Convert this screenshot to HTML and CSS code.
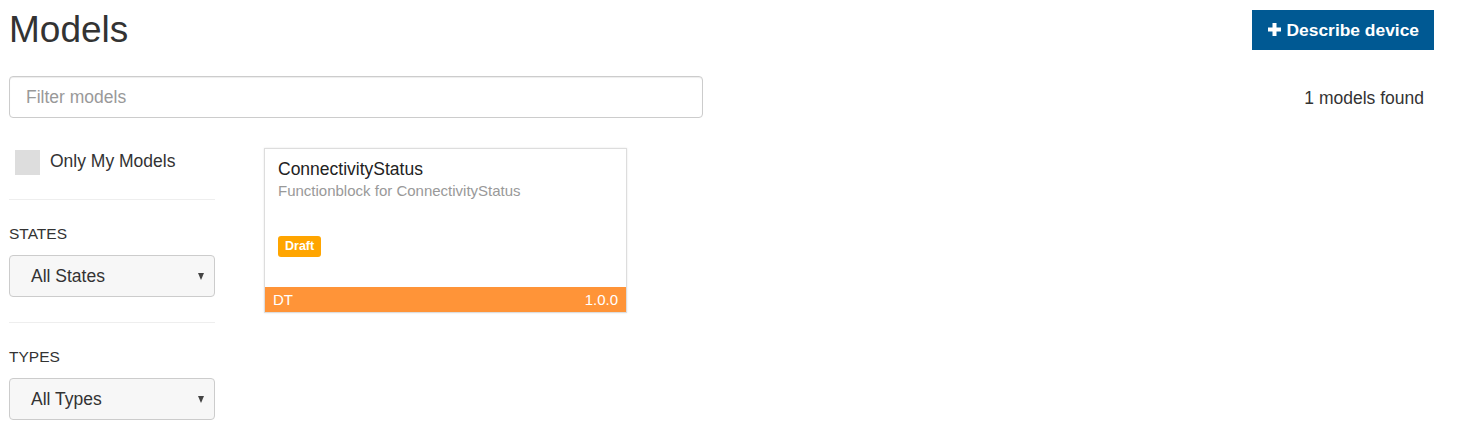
FILE: index.html
```html
<!DOCTYPE html>
<html>
<head>
<meta charset="utf-8">
<title>Models</title>
<link rel="stylesheet" href="styles.css">
</head>
<body>
<div class="page">
  <div class="header">
    <h1 class="title">Models</h1>
    <button class="btn-primary" type="button">
      <svg class="plus" width="13" height="13" viewBox="0 0 13 13"><rect x="4.5" y="0" width="4" height="13" fill="#fff"/><rect x="0" y="4.5" width="13" height="4" fill="#fff"/></svg>
      <span>Describe device</span>
    </button>
  </div>
  <div class="filter-row">
    <input class="filter" type="text" placeholder="Filter models">
    <div class="count">1 models found</div>
  </div>
  <div class="main">
    <aside class="sidebar">
      <label class="check-row"><span class="checkbox"></span><span class="check-label">Only My Models</span></label>
      <div class="divider"></div>
      <div class="group-label">STATES</div>
      <div class="select"><span>All States</span><span class="caret"></span></div>
      <div class="divider"></div>
      <div class="group-label">TYPES</div>
      <div class="select"><span>All Types</span><span class="caret"></span></div>
    </aside>
    <section class="cards">
      <div class="card">
        <div class="card-body">
          <div class="card-title">ConnectivityStatus</div>
          <div class="card-sub">Functionblock for ConnectivityStatus</div>
          <div class="badge">Draft</div>
        </div>
        <div class="card-foot"><span>DT</span><span>1.0.0</span></div>
      </div>
    </section>
  </div>
</div>
</body>
</html>
```

FILE: styles.css
```css
html, body {
  margin: 0;
  padding: 0;
  background: #fff;
}
body {
  font-family: "Liberation Sans", Arial, sans-serif;
  color: #333;
  font-size: 17.5px;
}
.page {
  padding: 0 38px 0 9px;
}
.header {
  display: flex;
  justify-content: space-between;
  align-items: flex-start;
  height: 76px;
}
.title {
  margin: 8px 0 0 0;
  font-weight: normal;
  font-size: 37px;
  line-height: 44px;
  color: #333;
}
.btn-primary {
  margin-top: 10px;
  height: 40px;
  display: flex;
  align-items: center;
  gap: 6px;
  padding: 0 15px 0 16px;
  border: 0;
  background: #005993;
  color: #fff;
  font-family: "Liberation Sans", Arial, sans-serif;
  font-weight: bold;
  font-size: 17.4px;
}
.plus {
  margin-top: -2px;
}
.filter-row {
  display: flex;
  justify-content: space-between;
  align-items: center;
}
.filter {
  box-sizing: border-box;
  width: 694px;
  height: 42px;
  border: 1px solid #ccc;
  border-radius: 4px;
  padding: 0 16px;
  font-family: "Liberation Sans", Arial, sans-serif;
  font-size: 17.5px;
  color: #555;
  box-shadow: inset 0 1px 1px rgba(0,0,0,0.075);
  outline: none;
}
.filter::placeholder {
  color: #999;
}
.count {
  margin-top: 2px;
  padding-right: 10px;
  font-size: 17.5px;
}
.main {
  display: flex;
  gap: 49px;
  margin-top: 30px;
  align-items: flex-start;
}
.sidebar {
  width: 206px;
  flex: none;
}
.check-row {
  display: flex;
  align-items: center;
  height: 26px;
  padding-left: 6px;
  margin-top: 1px;
  margin-bottom: 24px;
}
.checkbox {
  width: 25px;
  height: 25px;
  background: #ddd;
  margin-right: 10px;
}
.check-label {
  font-size: 17.5px;
  margin-top: -2px;
}
.divider {
  height: 1px;
  background: #eee;
}
.group-label {
  margin-top: 23px;
  font-size: 15.5px;
  line-height: 22px;
  margin-bottom: 10px;
}
.select {
  box-sizing: border-box;
  height: 42px;
  border: 1px solid #ccc;
  border-radius: 4px;
  background: #f7f7f7;
  display: flex;
  align-items: center;
  justify-content: space-between;
  padding: 0 10px 0 21px;
  font-size: 17.5px;
  margin-bottom: 25px;
}
.sidebar .select:last-child {
  margin-bottom: 0;
}
.caret {
  width: 0;
  height: 0;
  border-left: 3.5px solid transparent;
  border-right: 3.5px solid transparent;
  border-top: 7px solid #444;
}
.cards {
  display: flex;
  flex-wrap: wrap;
  gap: 20px;
}
.card {
  width: 363px;
  box-sizing: border-box;
  border: 1px solid #ddd;
  box-shadow: 0 0 2px rgba(0,0,0,0.1);
  display: flex;
  flex-direction: column;
}
.card-body {
  height: 138px;
  padding: 9px 13px 0 13px;
  box-sizing: border-box;
}
.card-title {
  font-size: 17.5px;
  line-height: 22px;
  color: #222;
}
.card-sub {
  font-size: 15px;
  line-height: 20px;
  color: #999;
  margin-top: 1px;
}
.badge {
  width: fit-content;
  margin-top: 35px;
  background: #ffa500;
  color: #fff;
  font-weight: bold;
  font-size: 12.5px;
  line-height: 21px;
  height: 21px;
  padding: 0 7px;
  border-radius: 3px;
}
.card-foot {
  height: 25px;
  background: #ff9438;
  color: #fff;
  display: flex;
  justify-content: space-between;
  align-items: center;
  padding: 0 8px;
  font-size: 15px;
}
```
